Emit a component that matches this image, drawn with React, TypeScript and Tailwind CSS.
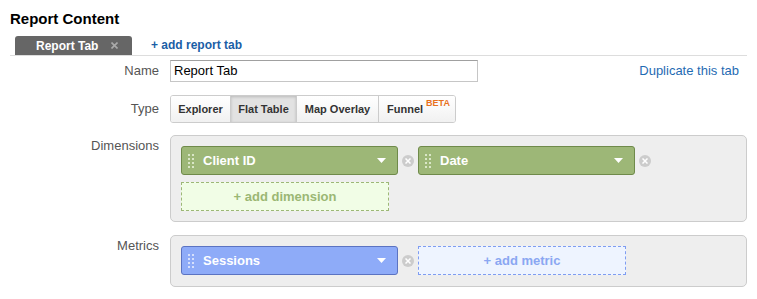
import React from "react";

const Grip = ({ color }: { color: string }) => (
  <svg width="6" height="14" viewBox="0 0 6 14" className="shrink-0">
    {[0, 4, 8, 12].map((y) =>
      [0, 4].map((x) => <rect key={`${x}-${y}`} x={x} y={y} width="2" height="2" fill={color} />)
    )}
  </svg>
);

const Caret = () => (
  <svg width="9" height="5" viewBox="0 0 9 5" className="shrink-0">
    <path d="M0 0 L9 0 L4.5 5 Z" fill="#ffffff" />
  </svg>
);

const RemoveX = () => (
  <span className="mx-[4px] flex h-[12px] w-[12px] shrink-0 items-center justify-center rounded-full bg-[#cccccc]">
    <svg width="6" height="6" viewBox="0 0 6 6">
      <path d="M0.5 0.5 L5.5 5.5 M5.5 0.5 L0.5 5.5" stroke="#ffffff" strokeWidth="1.5" />
    </svg>
  </span>
);

const Pill = ({ label, variant }: { label: string; variant: "green" | "blue" }) => {
  const cls =
    variant === "green"
      ? "bg-[#9db777] border-[#6f8a4a]"
      : "bg-[#8eabf8] border-[#5b73c2]";
  const dot = variant === "green" ? "#d9e6c6" : "#d6e0fc";
  return (
    <div className={`flex h-[29px] w-[217px] shrink-0 items-center rounded-[3px] border pl-[6px] pr-[11px] ${cls}`}>
      <Grip color={dot} />
      <span className="ml-[9px] flex-1 text-[13px] font-bold leading-none text-white">{label}</span>
      <Caret />
    </div>
  );
};

export default function App() {
  return (
    <div className="h-[299px] w-[757px] bg-white pl-[10px] pr-[10px] pt-[10px] font-['Liberation_Sans',Arial,sans-serif] text-[#333]">
      <h2 className="text-[15px] font-bold leading-[18px] text-black">Report Content</h2>
      <div className="mt-[7px] flex h-[21px] items-end border-b border-[#dddddd]">
        <div className="ml-[5px] flex h-[19px] w-[117px] items-center rounded-t-[3px] bg-[#666666] pl-[21px] text-[12px] font-bold leading-none text-white">
          <span>Report Tab</span>
          <svg width="7" height="7" viewBox="0 0 7 7" className="ml-[13px]">
            <path d="M0.5 0.5 L6.5 6.5 M6.5 0.5 L0.5 6.5" stroke="#aaaaaa" strokeWidth="1.6" />
          </svg>
        </div>
        <a className="mb-[4px] ml-[19px] text-[12px] font-bold leading-none text-[#1a5ea6]">+ add report tab</a>
      </div>

      <div className="mt-[4px] flex h-[22px] items-center">
        <div className="w-[149px] text-right text-[13px] text-[#555555]">Name</div>
        <div className="ml-[11px] flex h-[22px] w-[308px] items-center border border-[#c6c6c6] border-t-[#a0a0a0] pl-[3px] text-[13px] text-black">
          Report Tab
        </div>
        <div className="flex-1 pr-[8px] text-right text-[13px] text-[#1f6bb3]">Duplicate this tab</div>
      </div>

      <div className="mt-[13px] flex h-[28px] items-center">
        <div className="w-[149px] text-right text-[13px] text-[#555555]">Type</div>
        <div className="ml-[11px] flex h-[28px] overflow-hidden rounded-[3px] border border-[#cccccc] text-[11px] font-bold text-[#333333]">
          <div className="flex w-[59px] items-center justify-center bg-gradient-to-b from-white to-[#f1f1f1]">Explorer</div>
          <div className="flex w-[67px] items-center justify-center border-x border-[#cccccc] bg-[#e2e2e2] shadow-[inset_0_1px_3px_rgba(0,0,0,0.18)]">Flat Table</div>
          <div className="flex w-[82px] items-center justify-center border-r border-[#cccccc] bg-gradient-to-b from-white to-[#f1f1f1]">Map Overlay</div>
          <div className="flex w-[76px] items-center bg-gradient-to-b from-white to-[#f1f1f1] pl-[8px]">
            Funnel
            <span className="relative -top-[5px] ml-[3px] text-[9px] font-bold text-[#e8711c]">BETA</span>
          </div>
        </div>
      </div>

      <div className="mt-[12px] flex">
        <div className="w-[149px] pt-[3px] text-right text-[13px] leading-[16px] text-[#555555]">Dimensions</div>
        <div className="ml-[11px] h-[87px] w-[577px] rounded-[5px] border border-[#cccccc] bg-[#eeeeee] pl-[10px] pt-[10px]">
          <div className="flex items-center">
            <Pill label="Client ID" variant="green" />
            <RemoveX />
            <Pill label="Date" variant="green" />
            <RemoveX />
          </div>
          <div className="mt-[7px] flex h-[29px] w-[208px] items-center justify-center border border-dashed border-[#9db777] bg-[#f1fde6] text-[13px] font-bold text-[#9bb774]">
            + add dimension
          </div>
        </div>
      </div>

      <div className="mt-[13px] flex">
        <div className="w-[149px] pt-[3px] text-right text-[13px] leading-[16px] text-[#555555]">Metrics</div>
        <div className="ml-[11px] h-[52px] w-[577px] rounded-[5px] border border-[#cccccc] bg-[#eeeeee] pl-[10px] pt-[10px]">
          <div className="flex items-center">
            <Pill label="Sessions" variant="blue" />
            <RemoveX />
            <div className="flex h-[29px] w-[208px] items-center justify-center border border-dashed border-[#7f9df2] bg-[#eef4ff] text-[13px] font-bold text-[#8aa7f2]">
              + add metric
            </div>
          </div>
        </div>
      </div>
    </div>
  );
}
